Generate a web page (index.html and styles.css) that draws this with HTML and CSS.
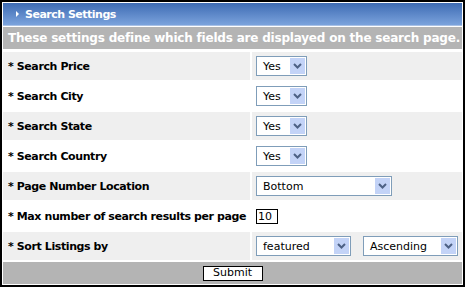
FILE: index.html
```html
<html>
    <head>
        <title>Search Settings</title>
        <link rel="stylesheet" href="styles.css">
    </head>
    <body>
        <div class="panel">
            <div class="panel-title">
                <span class="tri"></span>
                Search Settings
            </div>
            <div class="panel-info">These settings define which fields are displayed on the search page.</div>
            <form class="settings" action="#" method="GET">
                <div class="fila gris">
                    <div class="etiqueta">* Search Price</div>
                    <div class="valor">
                        <div class="combo combo-yes"><span class="combo-text">Yes</span><span class="combo-btn"><svg width="9" height="6" viewBox="0 0 9 6"><path d="M1 1 L4.5 4.5 L8 1" fill="none" stroke="#4d6185" stroke-width="2"/></svg></span></div>
                    </div>
                </div>
                <div class="fila">
                    <div class="etiqueta">* Search City</div>
                    <div class="valor">
                        <div class="combo combo-yes"><span class="combo-text">Yes</span><span class="combo-btn"><svg width="9" height="6" viewBox="0 0 9 6"><path d="M1 1 L4.5 4.5 L8 1" fill="none" stroke="#4d6185" stroke-width="2"/></svg></span></div>
                    </div>
                </div>
                <div class="fila gris">
                    <div class="etiqueta">* Search State</div>
                    <div class="valor">
                        <div class="combo combo-yes"><span class="combo-text">Yes</span><span class="combo-btn"><svg width="9" height="6" viewBox="0 0 9 6"><path d="M1 1 L4.5 4.5 L8 1" fill="none" stroke="#4d6185" stroke-width="2"/></svg></span></div>
                    </div>
                </div>
                <div class="fila">
                    <div class="etiqueta">* Search Country</div>
                    <div class="valor">
                        <div class="combo combo-yes"><span class="combo-text">Yes</span><span class="combo-btn"><svg width="9" height="6" viewBox="0 0 9 6"><path d="M1 1 L4.5 4.5 L8 1" fill="none" stroke="#4d6185" stroke-width="2"/></svg></span></div>
                    </div>
                </div>
                <div class="fila gris">
                    <div class="etiqueta">* Page Number Location</div>
                    <div class="valor">
                        <div class="combo combo-bottom"><span class="combo-text">Bottom</span><span class="combo-btn"><svg width="9" height="6" viewBox="0 0 9 6"><path d="M1 1 L4.5 4.5 L8 1" fill="none" stroke="#4d6185" stroke-width="2"/></svg></span></div>
                    </div>
                </div>
                <div class="fila">
                    <div class="etiqueta">* Max number of search results per page</div>
                    <div class="valor">
                        <div class="caja">10</div>
                    </div>
                </div>
                <div class="fila gris">
                    <div class="etiqueta">* Sort Listings by</div>
                    <div class="valor">
                        <div class="combo combo-sort"><span class="combo-text">featured</span><span class="combo-btn"><svg width="9" height="6" viewBox="0 0 9 6"><path d="M1 1 L4.5 4.5 L8 1" fill="none" stroke="#4d6185" stroke-width="2"/></svg></span></div>
                        <div class="combo combo-sort"><span class="combo-text">Ascending</span><span class="combo-btn"><svg width="9" height="6" viewBox="0 0 9 6"><path d="M1 1 L4.5 4.5 L8 1" fill="none" stroke="#4d6185" stroke-width="2"/></svg></span></div>
                    </div>
                </div>
                <div class="enviar">
                    <button type="button" class="boton">Submit</button>
                </div>
            </form>
        </div>
    </body>
</html>
```
FILE: styles.css
```css
html{
    background-color: #ffffff;
}
body{
    margin: 0;
    font-family: "DejaVu Sans", Verdana, sans-serif;
    font-size: 11px;
}
.panel{
    width: 465px;
    height: 287px;
    box-sizing: border-box;
    border: 2px solid #000000;
    padding: 1px;
    background: #ffffff;
}
.panel-title{
    height: 22px;
    border-bottom: 1px solid #a9c1e6;
    background: linear-gradient(#3e6cb4, #7ba3dc);
    color: #ffffff;
    font-weight: bold;
    font-size: 11px;
    letter-spacing: -0.5px;
    display: flex;
    align-items: center;
    padding-left: 13px;
}
.tri{
    width: 0;
    height: 0;
    border-top: 3px solid transparent;
    border-bottom: 3px solid transparent;
    border-left: 3px solid #ffffff;
    margin-right: 6px;
}
.panel-info{
    margin-top: 1px;
    height: 22px;
    background: #b4b4b4;
    color: #ffffff;
    font-weight: bold;
    font-size: 12px;
    letter-spacing: -0.2px;
    display: flex;
    align-items: center;
    padding-left: 5px;
    white-space: nowrap;
}
.settings{
    margin: 3px 0 0 0;
}
.fila{
    display: grid;
    grid-template-columns: 247px 1fr;
    column-gap: 2px;
    height: 28px;
    margin-bottom: 2px;
}
.fila.gris .etiqueta,
.fila.gris .valor{
    background: #efefef;
}
.etiqueta{
    display: flex;
    align-items: center;
    padding-left: 5px;
    font-weight: bold;
    letter-spacing: -0.4px;
    color: #000000;
    white-space: nowrap;
}
.valor{
    display: flex;
    align-items: center;
    padding-left: 4px;
    gap: 12px;
}
.combo{
    display: flex;
    align-items: center;
    box-sizing: border-box;
    height: 20px;
    border: 1px solid #7f9db9;
    background: #ffffff;
    font-size: 11px;
    color: #000000;
}
.combo-text{
    flex: 1;
    padding-left: 6px;
}
.combo-btn{
    width: 15px;
    height: 16px;
    margin-right: 1px;
    background: #c3d3f7;
    display: flex;
    align-items: center;
    justify-content: center;
}
.combo-yes{
    width: 51px;
}
.combo-bottom{
    width: 136px;
}
.combo-sort{
    width: 95px;
}
.caja{
    box-sizing: border-box;
    width: 22px;
    height: 15px;
    border: 1px solid #000000;
    background: #ffffff;
    font-size: 11px;
    line-height: 13px;
    padding-left: 1px;
}
.enviar{
    height: 22px;
    background: #b4b4b4;
    display: flex;
    align-items: center;
    justify-content: center;
}
.boton{
    box-sizing: border-box;
    width: 60px;
    height: 15px;
    border: 1px solid #000000;
    background: #ffffff;
    font-family: "DejaVu Sans", Verdana, sans-serif;
    font-size: 11px;
    padding: 0;
    line-height: 12px;
}
```
